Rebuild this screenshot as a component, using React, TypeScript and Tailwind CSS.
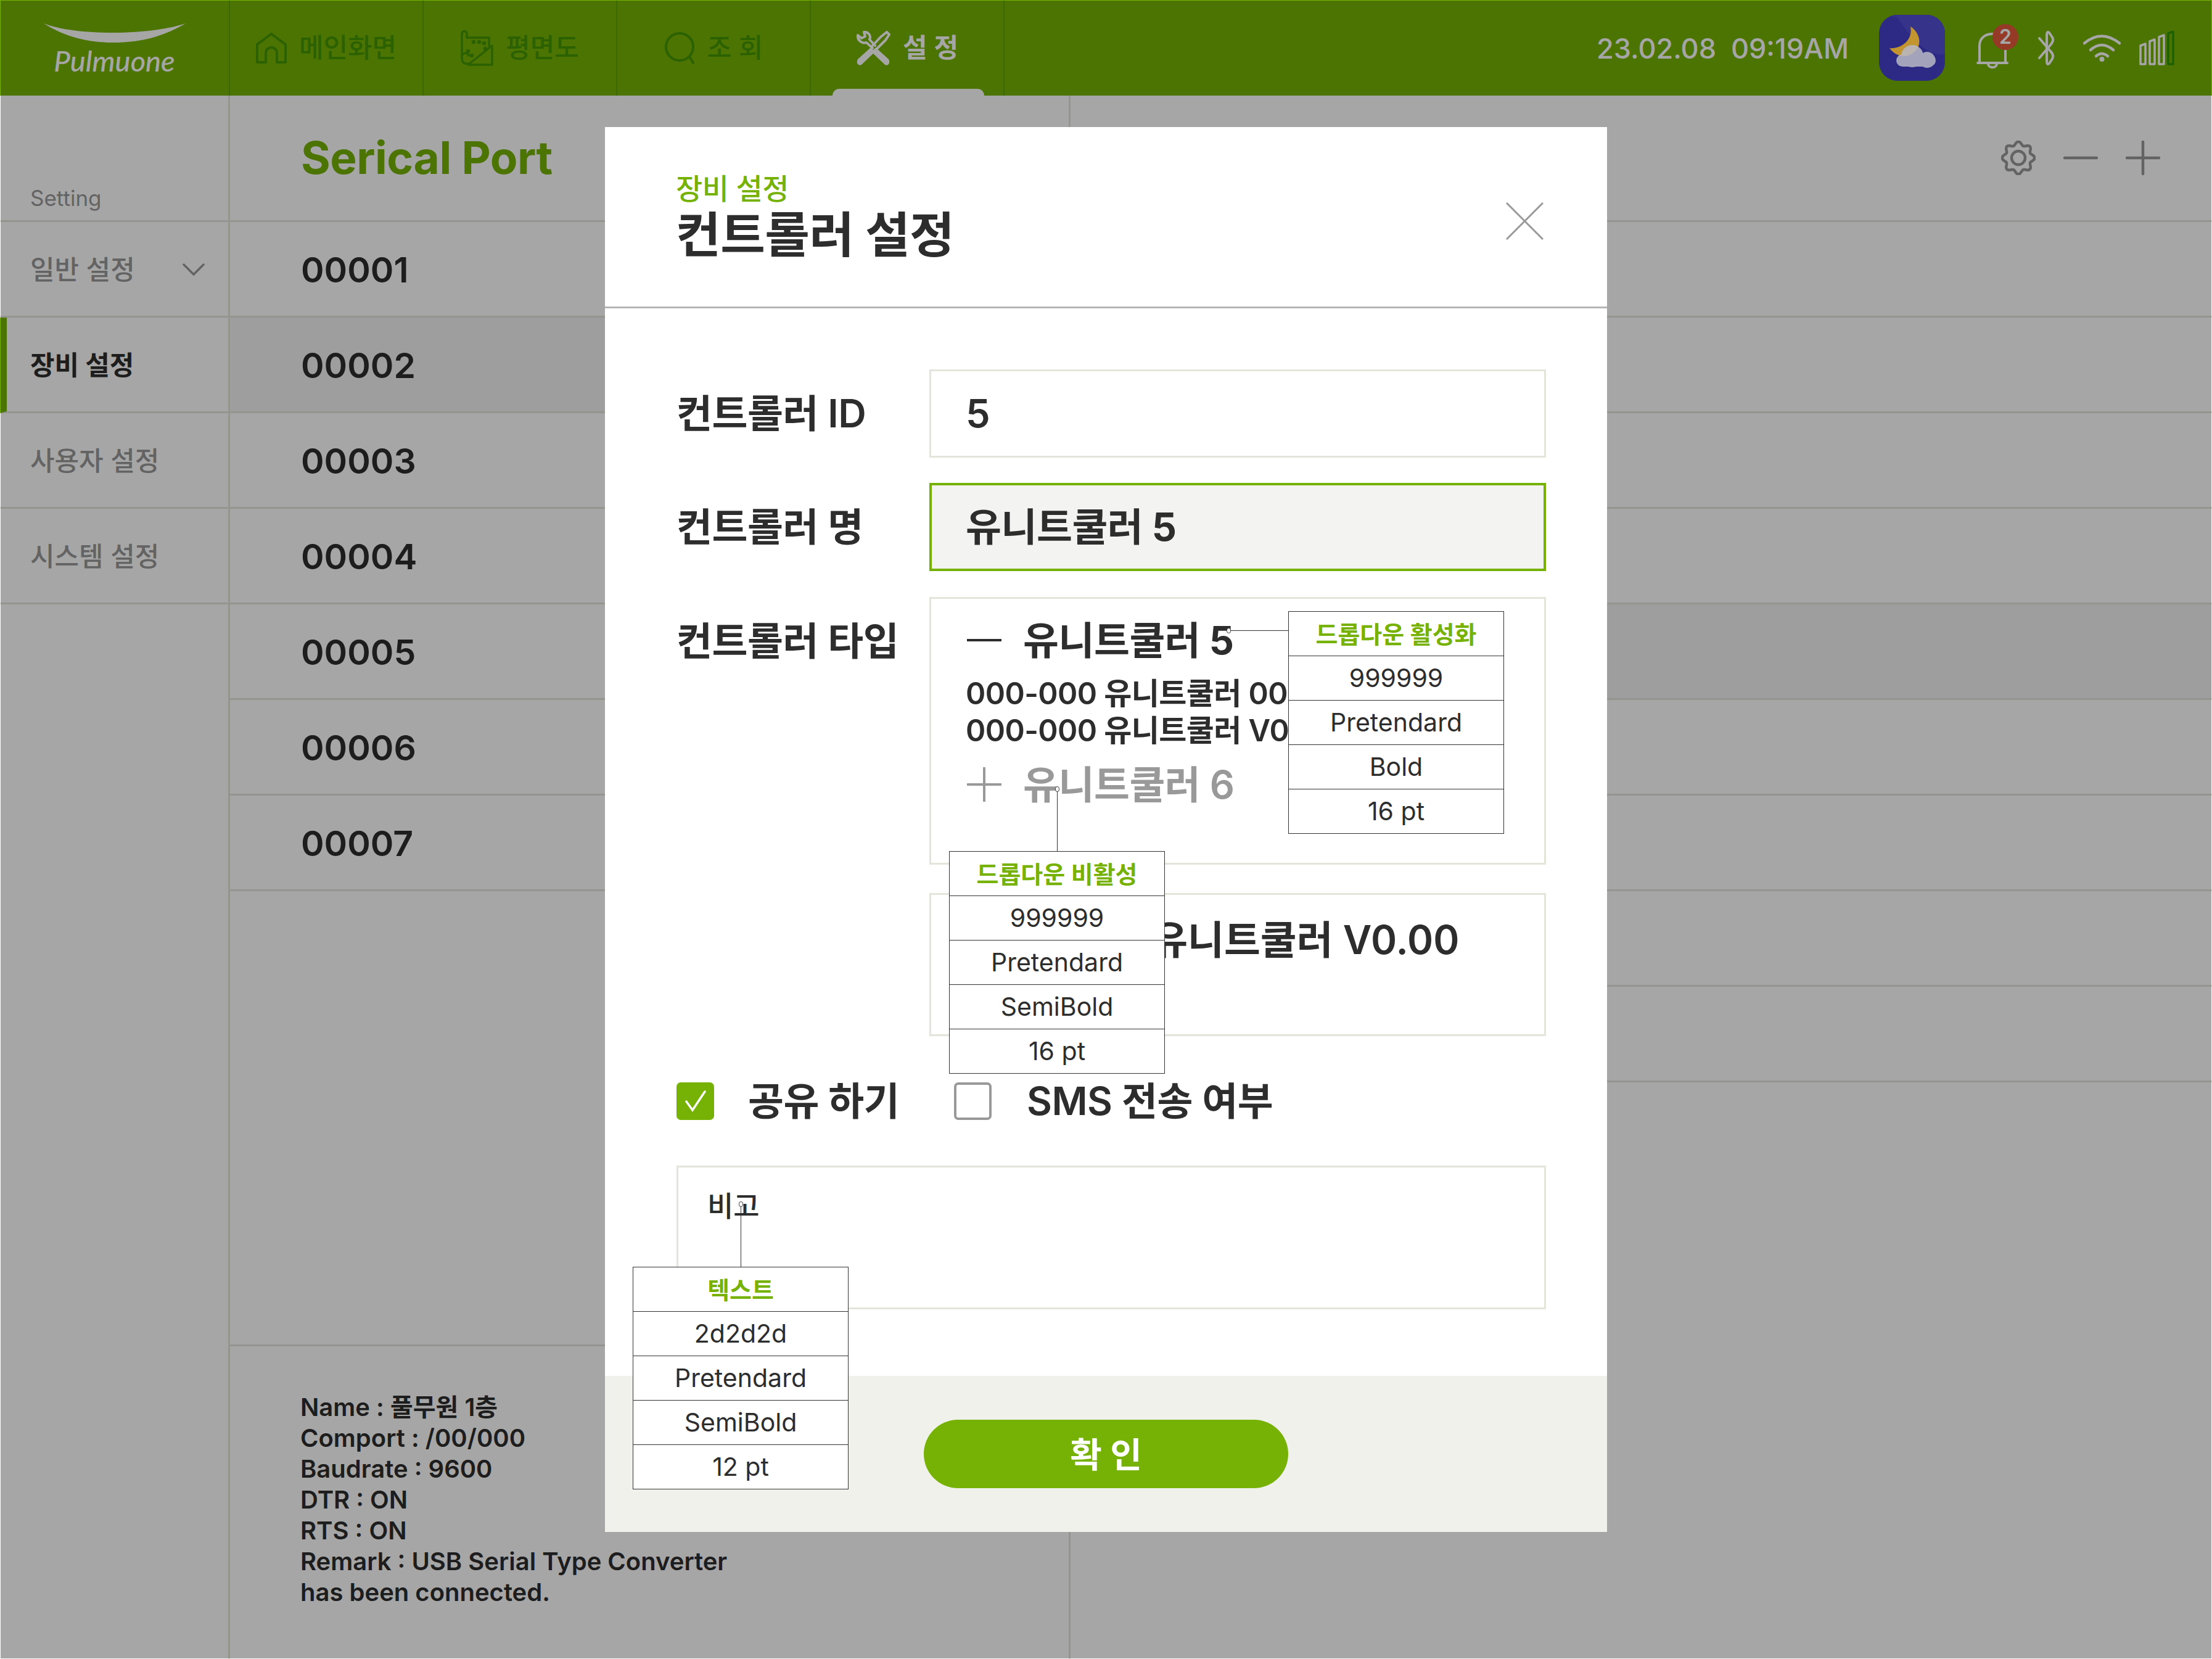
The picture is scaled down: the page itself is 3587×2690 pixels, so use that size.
import React from "react";

const gearPath = (() => {
  const pts: string[] = [];
  for (let i = 0; i <= 160; i++) {
    const t = (i / 160) * Math.PI * 2;
    const r = 23.5 + 2.8 * Math.cos(8 * t);
    pts.push(`${(28 + r * Math.sin(t)).toFixed(2)} ${(28 - r * Math.cos(t)).toFixed(2)}`);
  }
  return "M" + pts.join("L") + "Z";
})();

const HomeIcon = () => (
  <svg viewBox="0 0 50 50" className="w-[50px] h-[50px]" fill="none" stroke="#429503" strokeWidth="4" strokeLinejoin="round">
    <path d="M2 48V19L25 2L48 19V48H34V33C34 21 16 21 16 33V48Z" />
  </svg>
);
const PlanIcon = () => (
  <svg viewBox="0 0 53 58" className="w-[53px] h-[58px]" fill="none" stroke="#429503" strokeWidth="3.5" strokeLinejoin="round" strokeLinecap="round">
    <path d="M10 12V6C10 0 2 0 2 6V46C2 53 7 55 12 54" />
    <path d="M10 12H46V26" />
    <path d="M2 42C4 35 11 36 13 41" />
    <path d="M12 56L51 25V56Z" />
    <circle cx="21" cy="19" r="1.6" fill="#429503" />
    <circle cx="30" cy="19" r="1.6" fill="#429503" />
    <circle cx="38" cy="21" r="1.6" fill="#429503" />
    <circle cx="40" cy="30" r="1.6" fill="#429503" />
    <circle cx="12" cy="34" r="1.6" fill="#429503" />
    <circle cx="18" cy="41" r="1.6" fill="#429503" />
  </svg>
);
const SearchIcon = () => (
  <svg viewBox="0 0 50 52" className="w-[50px] h-[52px]" fill="none" stroke="#429503" strokeWidth="4" strokeLinecap="round">
    <circle cx="25" cy="24" r="22" />
    <path d="M41 40L47 50" />
  </svg>
);
const ToolsIcon = () => (
  <svg viewBox="0 0 56 56" className="w-[56px] h-[56px]">
    <path fill="#fff" d="M24 27L3 46Q0 52 4 55Q8 57 11 53L31 34Z" />
    <path fill="#fff" d="M32 27L53 46Q56 52 52 55Q48 57 45 53L25 34Z" />
    <g fill="none" stroke="#fff" strokeWidth="4" strokeLinejoin="round" strokeLinecap="round">
      <path d="M27 28L17 19C9 21 2 15 3 7L9 12L15 9L13 2C20 1 25 8 22 14L31 24" />
      <path d="M26 25L40 10L50 2L54 6L48 15L33 30" />
    </g>
  </svg>
);
const Weather = () => (
  <div className="relative z-20 ml-[49px] w-[107px] h-[107px] rounded-[30px] bg-[#2c2a84] overflow-hidden">
    <svg viewBox="0 0 107 107" className="w-full h-full">
      <path d="M8 0H107V64C80 68 52 40 30 4Z" fill="#36348a" />
      <path d="M51 19C62 26 67 38 65 48C62 60 50 67 40 67C31 67 22 61 17 54C34 56 56 42 51 19Z" fill="#c2952f" />
      <g opacity="0.85">
        <rect x="28" y="64" width="64" height="20" rx="10" fill="#b9b9c6" />
        <circle cx="54" cy="67" r="18" fill="#b9b9c6" />
        <circle cx="78" cy="73" r="13" fill="#b9b9c6" />
      </g>
    </svg>
  </div>
);
const Bell = () => (
  <div className="relative ml-[51px] w-[52px] h-[60px] mt-[8px]">
    <svg viewBox="0 0 52 60" className="w-[52px] h-[60px]" fill="none" stroke="#fff" strokeWidth="4" strokeLinecap="round">
      <path d="M5 50V22C5 10 14 3 26 3C38 3 47 10 47 22V50" />
      <path d="M2 50H50" />
      <path d="M19 52C20 59 32 59 33 52" />
    </svg>
    <div className="absolute left-[26px] top-[-13px] w-[42px] h-[42px] rounded-full bg-[#e4593c] flex items-center justify-center text-white text-[32px] leading-none font-semibold">2</div>
  </div>
);
const Bluetooth = () => (
  <svg viewBox="0 0 29 56" className="ml-[48px] w-[29px] h-[56px]" fill="none" stroke="#fff" strokeWidth="4" strokeLinecap="round" strokeLinejoin="round">
    <path d="M2 12L20 33Q27 40 22 47L18 53Q14 56 14 49V7Q14 0 18 3L22 9Q27 15 20 23L2 44" />
  </svg>
);
const Wifi = () => (
  <svg viewBox="0 0 61 46" className="ml-[44px] w-[61px] h-[46px]" fill="none" stroke="#fff" strokeWidth="4.5" strokeLinecap="round">
    <path d="M2 15Q30 -8 59 15" />
    <path d="M12 26Q30 10 49 26" />
    <path d="M21 36Q30 28 40 36" />
    <circle cx="30.5" cy="41" r="4" fill="#fff" stroke="none" />
  </svg>
);
const Signal = () => (
  <svg viewBox="0 0 57 56" className="ml-[30px] w-[57px] h-[56px]" fill="none" strokeWidth="3.5" strokeLinejoin="round">
    <path d="M2 54V24L10 21V54Z" stroke="#fff" />
    <path d="M17 54V17L25 14V54Z" stroke="#fff" />
    <path d="M32 54V10L40 7V54Z" stroke="#fff" />
    <path d="M47 54V4L55 1V54Z" stroke="#2d9503" />
  </svg>
);

const navClass = "w-[314px] h-full border-r-2 border-[#5fa204] flex items-center justify-center gap-[20px] text-[43px] font-medium";

const Header = () => (
  <div className="h-[155px] bg-[#76b205] flex items-center shrink-0">
    <div className="w-[373px] h-full border-r-2 border-[#5fa204] flex flex-col items-center pt-[38px] shrink-0">
      <svg viewBox="0 0 230 32" className="w-[230px] h-[32px] mr-[-1px]">
        <path d="M0 0C50 20 170 20 230 0C190 24 150 31 112 31C72 31 35 22 0 0Z" fill="#fff" />
      </svg>
      <span className="font-['Lato',sans-serif] italic font-medium text-white text-[47px] leading-[50px] mt-[3px]">Pulmuone</span>
    </div>
    <div className={navClass + " text-[#429503]"}><HomeIcon /><span>메인화면</span></div>
    <div className={navClass + " text-[#429503]"}><PlanIcon /><span>평면도</span></div>
    <div className={navClass + " text-[#429503]"}><SearchIcon /><span>조 회</span></div>
    <div className={navClass + " relative text-white font-semibold"}>
      <ToolsIcon /><span>설 정</span>
      <div className="absolute left-[35px] bottom-0 w-[246px] h-[11px] rounded-t-[12px] bg-white" />
    </div>
    <div className="ml-auto flex items-center pr-[61px]">
      <span className="text-white text-[45px] mt-[2px] font-medium whitespace-pre">23.02.08  09:19AM</span>
      <Weather />
      <Bell />
      <Bluetooth />
      <Wifi />
      <Signal />
    </div>
  </div>
);

const side = ["일반 설정", "장비 설정", "사용자 설정", "시스템 설정"];
const Sidebar = () => (
  <div className="w-[373px] shrink-0 border-r-[3px] border-[#e4e5da] flex flex-col">
    <div className="h-[205px] border-b-[3px] border-[#e4e5da] flex items-end pl-[49px] pb-[14px] text-[35px] leading-[44px] text-[#999999]">Setting</div>
    {side.map((s, i) => (
      <div key={s} className={"h-[155px] border-b-[3px] border-[#e4e5da] flex items-center justify-between pt-[2px] pr-[38px] text-[43px] " + (i === 1 ? "pl-[38px] border-l-[11px] border-l-[#76b205] font-bold text-[#2d2d2d]" : "pl-[49px] font-medium text-[#999999]")}>
        <span>{s}</span>
        {i === 0 && (
          <svg viewBox="0 0 36 20" className="w-[36px] h-[20px]" fill="none" stroke="#999" strokeWidth="3.5" strokeLinecap="round"><path d="M2 2L18 18L34 2" /></svg>
        )}
      </div>
    ))}
  </div>
);

const Main = () => (
  <div className="w-[1363px] shrink-0 border-r-[3px] border-[#e4e5da] flex flex-col">
    <div className="h-[205px] border-b-[3px] border-[#e4e5da] flex items-center pl-[115px] text-[#76b205] text-[73px] font-bold tracking-[-0.5px]">Serical Port</div>
    {["00001", "00002", "00003", "00004", "00005", "00006", "00007"].map((n, i) => (
      <div key={n} className={"h-[155px] border-b-[3px] border-[#e4e5da] flex items-center pt-[3px] pl-[115px] text-[57px] font-semibold text-[#2d2d2d] " + (i === 1 ? "bg-[#f3f3f3]" : "")}>{n}</div>
    ))}
    <div className="mt-auto h-[510px] border-t-[3px] border-[#e4e5da] pl-[114px] pt-[74px] text-[40px] leading-[50px] font-semibold text-[#2d2d2d]">
      <div>Name : 풀무원 1층</div>
      <div>Comport : /00/000</div>
      <div>Baudrate : 9600</div>
      <div>DTR : ON</div>
      <div>RTS : ON</div>
      <div>Remark : USB Serial Type Converter</div>
      <div>has been connected.</div>
    </div>
  </div>
);

const Right = () => (
  <div className="flex-1 flex flex-col">
    <div className="h-[205px] border-b-[3px] border-[#e4e5da] flex items-center justify-end pr-[84px] gap-[45px]">
      <svg viewBox="0 0 56 56" className="w-[56px] h-[56px]" fill="none" stroke="#999" strokeWidth="4.5">
        <path d={gearPath} />
        <circle cx="28" cy="28" r="11" />
      </svg>
      <svg viewBox="0 0 56 56" className="w-[56px] h-[56px]" fill="none" stroke="#999" strokeWidth="4.5" strokeLinecap="round"><path d="M2 28H54" /></svg>
      <svg viewBox="0 0 56 56" className="w-[56px] h-[56px]" fill="none" stroke="#999" strokeWidth="4.5" strokeLinecap="round"><path d="M2 28H54M28 2V54" /></svg>
    </div>
    {[0, 1, 2, 3, 4, 5, 6, 7, 8].map((i) => (
      <div key={i} className={"h-[155px] border-b-[3px] border-[#e4e5da] " + (i === 4 ? "bg-[#f3f3f3]" : "")} />
    ))}
  </div>
);

const Note = ({ title, rows, className }: { title: string; rows: string[]; className: string }) => (
  <div className={"absolute w-[350px] bg-white border border-[#333] flex flex-col text-[41px] font-normal tracking-normal text-[#2d2d2d] leading-none z-10 " + className}>
    <div className="h-[71px] pt-[2px] flex items-center justify-center text-[39px] text-[#76b205] font-semibold">{title}</div>
    {rows.map((r) => (
      <div key={r} className="h-[72px] border-t border-[#333] flex items-center justify-center">{r}</div>
    ))}
  </div>
);

const Dot = ({ className }: { className: string }) => (
  <div className={"absolute w-[7px] h-[9px] rounded-full border border-[#333] bg-white z-10 " + className} />
);

const fieldBorder = "border-[3px] border-[#e4e5da]";

const Modal = () => (
  <div className="absolute z-20 left-[981px] top-[206px] w-[1625px] h-[2278px] bg-white flex flex-col font-semibold text-[#2d2d2d]">
    <div className="relative h-[294px] shrink-0 border-b-[3px] border-[#b5b5b5] pl-[115px] pt-[74px]">
      <div className="text-[47px] leading-[52px] font-medium text-[#76b205] tracking-[-0.5px]">장비 설정</div>
      <div className="text-[79px] leading-[90px] font-bold mt-[4px] tracking-[-0.5px]">컨트롤러 설정</div>
      <svg viewBox="0 0 61 61" className="absolute left-[1461px] top-[122px] w-[61px] h-[61px]" fill="none" stroke="#999" strokeWidth="3">
        <path d="M1 1L60 60M60 1L1 60" />
      </svg>
    </div>
    <div className="relative flex-1 pl-[116px] pr-[99px] pt-[99px] text-[63px] tracking-[-0.5px]">
      <div className="grid grid-cols-[410px_1000px] items-center">
        <div>컨트롤러 ID</div>
        <div className={"h-[143px] pl-[56px] flex items-center " + fieldBorder}>5</div>
      </div>
      <div className="grid grid-cols-[410px_1000px] items-center mt-[41px]">
        <div>컨트롤러 명</div>
        <div className="h-[143px] pl-[55px] flex items-center border-4 border-[#76b205] bg-[#f3f3f1] font-bold">유니트쿨러 5</div>
      </div>
      <div className="grid grid-cols-[410px_1000px] mt-[42px]">
        <div className="pt-[24px]">컨트롤러 타입</div>
        <div className="flex flex-col gap-[46px]">
          <div className={"h-[434px] pl-[58px] pt-[32px] overflow-hidden " + fieldBorder}>
            <div className="flex items-center h-[70px] font-bold">
              <span className="w-[56px] h-[4px] bg-[#2d2d2d] mr-[35px]" />유니트쿨러 5
            </div>
            <div className="mt-[22px] ml-[-2px] text-[49px] leading-[60px] font-semibold whitespace-nowrap tracking-[-0.6px]">
              <div>000-000 유니트쿨러 00000</div>
              <div>000-000 유니트쿨러 V0.00</div>
            </div>
            <div className="flex items-center h-[70px] mt-[22px] text-[#999999]">
              <svg viewBox="0 0 56 56" className="w-[56px] h-[56px] mr-[35px]" fill="none" stroke="#999" strokeWidth="4" strokeLinecap="round"><path d="M1 28H55M28 1V55" /></svg>
              유니트쿨러 6
            </div>
          </div>
          <div className={"h-[232px] pl-[58px] pt-[25px] text-[64px] whitespace-nowrap tracking-normal " + fieldBorder}>000-000 유니트쿨러 V0.00</div>
        </div>
      </div>
      <div className="flex items-center mt-[58px]">
        <div className="w-[61px] h-[61px] rounded-[7px] bg-[#76b205] flex items-center justify-center">
          <svg viewBox="0 0 36 36" className="w-[36px] h-[36px]" fill="none" stroke="#fff" strokeWidth="3.5" strokeLinecap="round"><path d="M3 19L13 33L33 3" /></svg>
        </div>
        <div className="ml-[55px] w-[334px]">공유 하기</div>
        <div className="w-[61px] h-[61px] rounded-[7px] border-4 border-[#999999]" />
        <div className="ml-[57px]">SMS 전송 여부</div>
      </div>
      <div className={"mt-[57px] h-[233px] pl-[47px] pt-[30px] text-[46px] leading-[64px] font-medium tracking-normal " + fieldBorder}>비고</div>

      {/* spec call-outs */}
      <div className="absolute left-[1011px] top-[522px] w-[97px] h-px bg-[#333] z-10" />
      <Dot className="left-[1008px] top-[518px]" />
      <Note className="left-[1108px] top-[491px]" title="드롭다운 활성화" rows={["999999", "Pretendard", "Bold", "16 pt"]} />
      <div className="absolute left-[733px] top-[780px] w-px h-[100px] bg-[#333] z-10" />
      <Dot className="left-[730px] top-[775px]" />
      <Note className="left-[558px] top-[880px]" title="드롭다운 비활성" rows={["999999", "Pretendard", "SemiBold", "16 pt"]} />
      <div className="absolute left-[220px] top-[1454px] w-px h-[100px] bg-[#333] z-10" />
      <Dot className="left-[217px] top-[1448px]" />
      <Note className="left-[45px] top-[1554px]" title="텍스트" rows={["2d2d2d", "Pretendard", "SemiBold", "12 pt"]} />
    </div>
    <div className="h-[253px] shrink-0 bg-[#f1f1ec] pl-[517px] pt-[71px]">
      <div className="w-[591px] h-[111px] pt-[2px] rounded-full bg-[#76b205] text-white text-[56px] font-bold flex items-center justify-center">확 인</div>
    </div>
  </div>
);

export default function App() {
  return (
    <div className="relative w-[3587px] h-[2690px] bg-white overflow-hidden flex flex-col font-[Inter,'Noto_Sans_CJK_KR',sans-serif]">
      <Header />
      <div className="flex-1 flex min-h-0">
        <Sidebar />
        <Main />
        <Right />
      </div>
      <div className="absolute left-px top-px right-px bottom-px bg-black/35 z-10" />
      <Modal />
    </div>
  );
}
